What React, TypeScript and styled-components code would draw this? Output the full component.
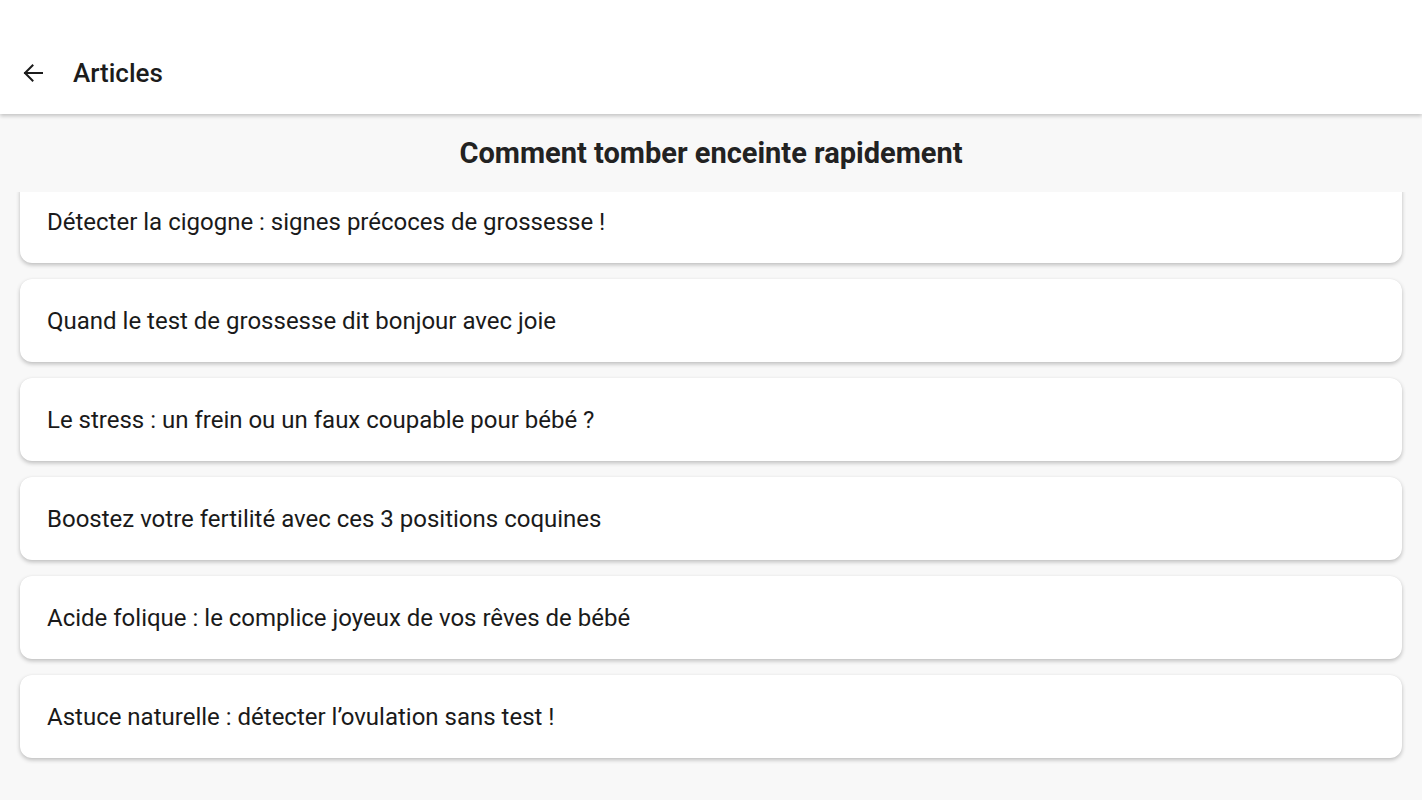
import React, { useEffect, useRef } from 'react';
import styled, { createGlobalStyle } from 'styled-components';

const GlobalStyle = createGlobalStyle`
  html, body {
    margin: 0;
    padding: 0;
    background: #f8f8f8;
    font-family: Roboto, "Noto Sans", sans-serif;
  }
`;

const Screen = styled.div`
  height: 800px;
  display: flex;
  flex-direction: column;
  background: #f8f8f8;
  overflow: hidden;
`;

const AppBar = styled.header`
  position: relative;
  z-index: 2;
  height: 114px;
  box-sizing: border-box;
  padding-top: 32px;
  background: #ffffff;
  box-shadow: 0 2px 4px rgba(0, 0, 0, 0.22);
  display: flex;
  align-items: center;
`;

const BackButton = styled.button`
  width: 40px;
  height: 40px;
  margin-left: 13px;
  border: none;
  background: transparent;
  padding: 0;
  display: flex;
  align-items: center;
  justify-content: center;
  color: #1c1c1c;
  cursor: pointer;
`;

const BarTitle = styled.h1`
  margin: 0 0 0 20px;
  font-size: 26px;
  font-weight: 500;
  color: #1c1c1c;
`;

const SectionTitle = styled.h2`
  margin: 0;
  height: 78px;
  display: flex;
  align-items: center;
  justify-content: center;
  font-size: 29px;
  font-weight: 700;
  color: #222222;
`;

const List = styled.div`
  flex: 1;
  overflow: hidden;
  padding: 0 20px 80px;
  display: flex;
  flex-direction: column;
  gap: 16px;
`;

const Card = styled.div`
  flex-shrink: 0;
  height: 83px;
  box-sizing: border-box;
  padding: 0 27px;
  display: flex;
  align-items: center;
  background: #ffffff;
  border-radius: 12px;
  box-shadow: 0 2px 4px rgba(0, 0, 0, 0.24), 0 0 1px rgba(0, 0, 0, 0.06);
  font-size: 24px;
  color: #1a1a1a;
`;

const articles = [
  'Détecter la cigogne : signes précoces de grossesse !',
  'Quand le test de grossesse dit bonjour avec joie',
  'Le stress : un frein ou un faux coupable pour bébé ?',
  'Boostez votre fertilité avec ces 3 positions coquines',
  'Acide folique : le complice joyeux de vos rêves de bébé',
  'Astuce naturelle : détecter l’ovulation sans test !',
];

function BackIcon() {
  return (
    <svg width="24" height="24" viewBox="0 0 24 24" fill="none">
      <path d="M21 12H4M11.5 4.5L4 12l7.5 7.5" stroke="currentColor" strokeWidth="2" strokeLinecap="square" />
    </svg>
  );
}

export default function App() {
  const listRef = useRef<HTMLDivElement>(null);
  useEffect(() => {
    if (listRef.current) listRef.current.scrollTop = 12;
  }, []);
  return (
    <>
      <GlobalStyle />
      <Screen>
        <AppBar>
          <BackButton aria-label="Retour">
            <BackIcon />
          </BackButton>
          <BarTitle>Articles</BarTitle>
        </AppBar>
        <SectionTitle>Comment tomber enceinte rapidement</SectionTitle>
        <List ref={listRef}>
          {articles.map((a) => (
            <Card key={a}>{a}</Card>
          ))}
        </List>
      </Screen>
    </>
  );
}
